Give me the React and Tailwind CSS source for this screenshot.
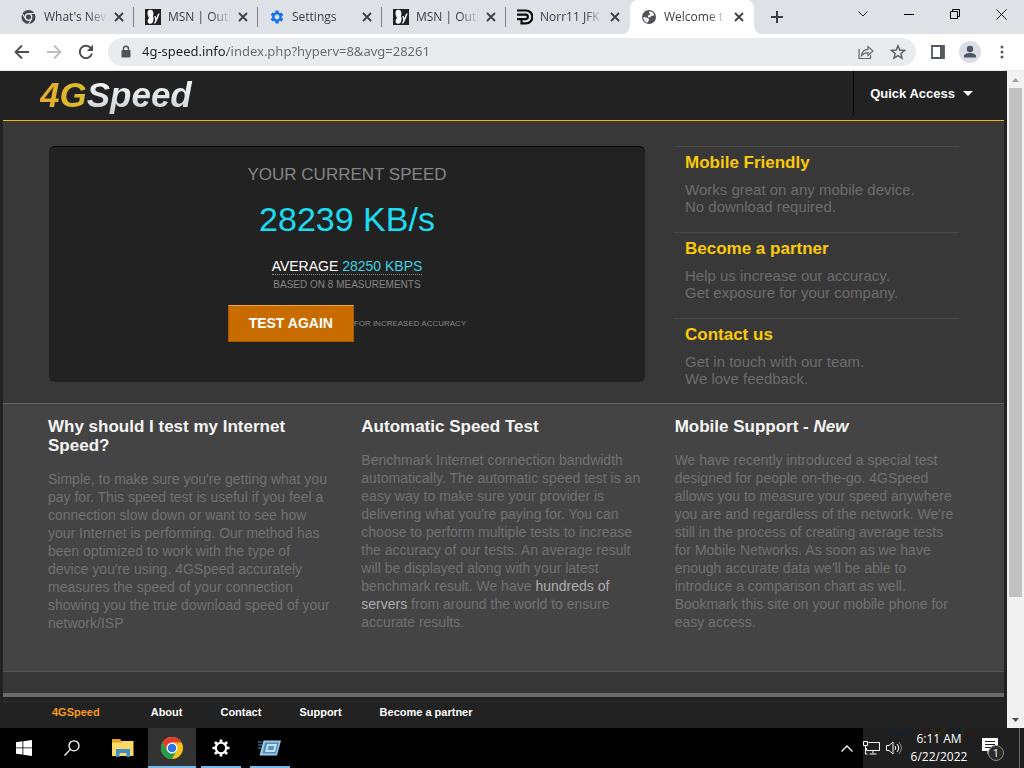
import React from "react";

const UI_FONT = "font-['Open_Sans','Noto_Sans',sans-serif]";

function ChromeMono() {
  return (
    <svg viewBox="0 0 16 16" className="size-4 shrink-0" fill="none" aria-hidden="true">
      <circle cx="7.500" cy="8" r="7" fill="#44474b" />
      <circle cx="7.500" cy="8" r="3.200" fill="#44474b" stroke="#dee1e6" strokeWidth="1.400" />
      <path d="M7.500 4.500h6.200M4.400 9.800L1.500 4.800M10.600 9.800l-3 5.200" stroke="#dee1e6" strokeWidth="1.200" />
    </svg>
  );
}

function MsnIcon() {
  return (
    <svg viewBox="0 0 16 16" className="size-4 shrink-0" aria-hidden="true">
      <rect width="16" height="16" fill="#1f2023" />
      <path
        d="M3.400 1.400C4.800.3 7.100.8 8 2.600C8.600 4 8.400 5.700 8 7.200C8.900 9 8.700 12.300 7.300 13.900C6 15.100 3.600 14.900 2.900 13.400C2.200 11.800 2.800 10 4.200 9C2.700 7.300 1.700 3 3.400 1.400Z"
        fill="#fff"
      />
      <path d="M9.200 7.200L10.600 6.900L11.400 9.200L13 4.800L14.700 4.600C13.500 8 12.200 11.800 10.200 14.600L8.700 14.300C9.600 13 10.200 12 10.300 11Z" fill="#fff" />
    </svg>
  );
}

function GearShape({ className, color, hole }) {
  return (
    <svg viewBox="0 0 24 24" className={className} aria-hidden="true">
      <path
        fill={color}
        d="M19.140 12.940c.04-.3.06-.61.06-.94 0-.32-.02-.64-.07-.94l2.030-1.580c.18-.14.23-.41.12-.61l-1.920-3.320c-.12-.22-.37-.29-.59-.22l-2.390.96c-.5-.38-1.030-.7-1.620-.94l-.36-2.540c-.04-.24-.24-.41-.48-.41h-3.840c-.24 0-.43.17-.47.41l-.36 2.540c-.59.24-1.130.57-1.620.94l-2.390-.96c-.22-.08-.47 0-.59.22L2.740 8.870c-.12.21-.08.47.12.61l2.030 1.580c-.05.3-.09.63-.09.94s.02.64.07.94l-2.030 1.580c-.18.14-.23.41-.12.61l1.920 3.320c.12.22.37.29.59.22l2.390-.96c.5.38 1.030.7 1.620.94l.36 2.540c.05.24.24.41.48.41h3.840c.24 0 .44-.17.47-.41l.36-2.540c.59-.24 1.130-.56 1.620-.94l2.390.96c.22.08.47 0 .59-.22l1.920-3.320c.12-.22.07-.47-.12-.61l-2.010-1.580z"
      />
      <circle cx="12" cy="12" r="3.600" fill={hole} />
    </svg>
  );
}

function ParallelIcon() {
  return (
    <svg viewBox="0 0 16 16" className="size-4 shrink-0" fill="none" stroke="#0a0a0a" strokeWidth="2.200" aria-hidden="true">
      <path d="M0 1.500h9a6.200 6.200 0 0 1 0 12.800H4.500V10" />
      <path d="M0 5.700h8.600a2.200 2.200 0 0 1 0 4.400H0" />
    </svg>
  );
}

function GlobeIcon() {
  return (
    <svg viewBox="0 0 16 16" className="size-4 shrink-0" aria-hidden="true">
      <circle cx="8" cy="8" r="7" fill="#505357" />
      <path d="M8.600 2.300l2.600.8 2.300 2.600-1.500 1.100-2 .2-.6 1.500-2.200-.2-.4-1.700 2-.6.300-1.500-1.300-.6zM2.300 8l3.400.6 2.400 1.500-.5 1.900-1.500 1.800C3.800 12.900 2.200 10.700 2.300 8z" fill="#fff" />
    </svg>
  );
}

function CloseX() {
  return (
    <svg viewBox="0 0 10 10" className="size-2.5" fill="none" stroke="#3c4043" strokeWidth="1.800" aria-hidden="true">
      <path d="M1 1l8 8M9 1L1 9" />
    </svg>
  );
}

const TABS = [
  { title: "What's New", icon: <ChromeMono /> },
  { title: "MSN | Outl", icon: <MsnIcon /> },
  { title: "Settings", icon: <GearShape className="size-4 shrink-0" color="#1a73e8" hole="#dee1e6" /> },
  { title: "MSN | Outl", icon: <MsnIcon /> },
  { title: "Norr11 JFK", icon: <ParallelIcon /> },
  { title: "Welcome t", icon: <GlobeIcon />, active: true },
];

function Tab({ title, icon, active, divider }) {
  return (
    <div
      className={
        "relative flex h-full w-[124px] items-center pr-2.5 pl-[11px] " +
        (active ? "rounded-t-lg bg-white" : "")
      }
    >
      {active && (
        <svg viewBox="0 0 8 8" className="absolute bottom-0 -left-2 size-2" fill="#fff" aria-hidden="true">
          <path d="M8 0v8H0a8 8 0 0 0 8-8z" />
        </svg>
      )}
      {active && (
        <svg viewBox="0 0 8 8" className="absolute -right-2 bottom-0 size-2" fill="#fff" aria-hidden="true">
          <path d="M0 0v8h8a8 8 0 0 1-8-8z" />
        </svg>
      )}
      <button
        type="button"
        role="tab"
        aria-selected={Boolean(active)}
        className="flex min-w-0 flex-1 items-center gap-[7px] whitespace-nowrap text-left text-xs text-[#3c4043] [mask-image:linear-gradient(to_right,#000_68px,transparent_86px)]"
      >
        {icon}
        {title}
      </button>
      <button type="button" aria-label="Close tab" className="ml-1 flex shrink-0">
        <CloseX />
      </button>
      {divider && <span className="-mr-2.5 ml-[9px] h-5 w-px bg-[#808489]" />}
    </div>
  );
}

function TabStrip() {
  return (
    <div className="flex h-[34px] bg-[#dee1e6]">
      <div role="tablist" className="flex pl-2.5">
        {TABS.map((t, i) => (
          <Tab key={i} {...t} divider={i < 4} />
        ))}
      </div>
      <button type="button" aria-label="New tab" className="flex w-[46px] items-center justify-center">
        <svg viewBox="0 0 12 12" className="size-3" stroke="#3c4043" strokeWidth="2" aria-hidden="true">
          <path d="M6 0v12M0 6h12" />
        </svg>
      </button>
      <div className="ml-auto flex h-7">
        <button type="button" aria-label="Search tabs" className="flex w-[46px] items-center justify-center">
          <svg viewBox="0 0 10 6" className="h-1.5 w-2.5" fill="none" stroke="#222" aria-hidden="true">
            <path d="M.5.5L5 5 9.500.5" />
          </svg>
        </button>
        <button type="button" aria-label="Minimize" className="flex w-[46px] items-center justify-center">
          <span className="h-px w-2.5 bg-black" />
        </button>
        <button type="button" aria-label="Restore" className="flex w-[46px] items-center justify-center">
          <svg viewBox="0 0 10 10" className="size-2.5" fill="none" stroke="#000" aria-hidden="true">
            <path d="M.5 2.500h7v7h-7zM2.500 2.500v-2h7v7h-2" />
          </svg>
        </button>
        <button type="button" aria-label="Close window" className="flex w-[46px] items-center justify-center">
          <svg viewBox="0 0 11 11" className="size-[11px]" fill="none" stroke="#000" aria-hidden="true">
            <path d="M.5.5l10 10M10.500.5l-10 10" />
          </svg>
        </button>
      </div>
    </div>
  );
}

function ToolButton({ label, children }) {
  return (
    <button type="button" aria-label={label} className="flex h-8 w-8 shrink-0 items-center justify-center">
      {children}
    </button>
  );
}

function Toolbar() {
  return (
    <div className="flex h-[37px] items-center border-b border-[#e4e6e9] bg-white px-1.5">
      <ToolButton label="Back">
        <svg viewBox="0 0 16 16" className="size-4" fill="none" stroke="#4b4e52" strokeWidth="1.900" aria-hidden="true">
          <path d="M15 8H2M8 1.500L1.500 8 8 14.500" />
        </svg>
      </ToolButton>
      <ToolButton label="Forward">
        <svg viewBox="0 0 16 16" className="size-4" fill="none" stroke="#bcbec1" strokeWidth="1.900" aria-hidden="true">
          <path d="M1 8h13M8 1.500L14.500 8 8 14.500" />
        </svg>
      </ToolButton>
      <ToolButton label="Reload">
        <svg viewBox="0 0 16 16" className="size-4" fill="none" aria-hidden="true">
          <path d="M13.200 4.500A6.200 6.200 0 1 0 14 9.500" stroke="#4b4e52" strokeWidth="1.900" />
          <path d="M15 .8v6.200H8.800z" fill="#4b4e52" />
        </svg>
      </ToolButton>
      <div className="mx-1.5 flex h-7 min-w-0 flex-1 items-center rounded-full bg-[#e9ebee] pl-3 pr-0.5">
        <svg viewBox="0 0 12 14" className="h-3.5 w-3 shrink-0" fill="none" aria-hidden="true">
          <rect x="1.500" y="5" width="9" height="7.500" rx="1" fill="#505357" />
          <path d="M3.500 5.500V3.800a2.500 2.500 0 0 1 5 0v1.700" stroke="#505357" strokeWidth="1.400" />
        </svg>
        <input
          type="text"
          aria-label="Address"
          defaultValue="4g-speed.info/index.php?hyperv=8&avg=28261"
          className="ml-2.5 min-w-0 flex-1 bg-[linear-gradient(to_right,#202124_85px,#66696e_85px)] bg-clip-text font-['Noto_Sans',sans-serif] text-[13px] text-transparent outline-none"
        />
        <ToolButton label="Share">
          <svg viewBox="0 0 16 16" className="size-4" fill="none" stroke="#66696e" strokeWidth="1.200" aria-hidden="true">
            <path d="M1 5v9.500h11.500V11" />
            <path d="M3.500 11.500C4 7.500 6.500 5.500 10 5.300V2.500L15 7l-5 4.500V8.700C7.500 8.700 5.500 9.200 3.500 11.500z" />
          </svg>
        </ToolButton>
        <ToolButton label="Bookmark this tab">
          <svg viewBox="0 0 16 16" className="size-4" fill="none" stroke="#5f6368" strokeWidth="1.500" aria-hidden="true">
            <path d="M8 1.800l1.800 4.300 4.700.4-3.600 3 1.100 4.600L8 11.700l-4 2.400 1.100-4.600-3.600-3 4.700-.4z" />
          </svg>
        </ToolButton>
      </div>
      <ToolButton label="Side panel">
        <svg viewBox="0 0 14 14" className="size-3.5" aria-hidden="true">
          <path d="M1 1h12v12H1z" fill="none" stroke="#55585c" strokeWidth="1.800" />
          <path d="M9 1h4v12H9z" fill="#55585c" />
        </svg>
      </ToolButton>
      <ToolButton label="Profile">
        <svg viewBox="0 0 22 22" className="size-[22px]" aria-hidden="true">
          <circle cx="11" cy="11" r="11" fill="#dadde3" />
          <circle cx="11" cy="8" r="3.200" fill="#4b5563" />
          <path d="M5 16.500v-1.200c0-2.200 3.500-3.200 6-3.200s6 1 6 3.200v1.200z" fill="#4b5563" />
        </svg>
      </ToolButton>
      <ToolButton label="Menu">
        <svg viewBox="0 0 4 14" className="h-3.5 w-1" fill="#55585c" aria-hidden="true">
          <circle cx="2" cy="2" r="1.500" />
          <circle cx="2" cy="7" r="1.500" />
          <circle cx="2" cy="12" r="1.500" />
        </svg>
      </ToolButton>
    </div>
  );
}

const FEATURES = [
  { title: "Mobile Friendly", lines: ["Works great on any mobile device.", "No download required."] },
  { title: "Become a partner", lines: ["Help us increase our accuracy.", "Get exposure for your company."] },
  { title: "Contact us", lines: ["Get in touch with our team.", "We love feedback."] },
];

function SpeedPanel() {
  return (
    <section className="flex h-[236px] flex-1 flex-col items-center rounded-md border-t border-black bg-[#222] uppercase">
      <h2 className="mt-4 text-[17px] leading-6 text-[#858585]">Your current speed</h2>
      <p className="mt-3 text-[34px] leading-10 text-[#1cdcf0] normal-case">28239 KB/s</p>
      <p className="mt-[19px] border-b border-dotted border-[#8a8a8a] text-[14px] leading-4 text-white">
        Average <span className="text-[#3fd0e0]">28250 kbps</span>
      </p>
      <p className="mt-1 text-[10px] leading-3 text-[#858585]">Based on 8 measurements</p>
      <div className="mt-3.5 flex items-center">
        <button
          type="button"
          className="h-[37px] w-[126px] border border-[#a85b00] border-t-[#f0a54a] bg-[#c96c00] text-[14px] font-bold text-white uppercase"
        >
          Test again
        </button>
        <span className="text-[8px] text-[#858585]">For increased accuracy</span>
      </div>
    </section>
  );
}

function InfoColumn({ title, children }) {
  return (
    <section>
      <h2 className="text-[17px] leading-[19px] font-bold text-[#f4f4f4]">{title}</h2>
      <p className="mt-[15px] text-[14px] leading-[18px] text-[#717171]">{children}</p>
    </section>
  );
}

function Site() {
  return (
    <main className="flex min-w-0 flex-1 flex-col bg-[#222] px-[3px] font-['Liberation_Sans',Arial,sans-serif]">
      <header className="flex h-[50px] justify-between border-b border-[#dcbc3c]">
        <h1 className="pl-[37px] text-[35px] leading-[48px] font-bold italic">
          <span className="bg-linear-to-r from-[#e8a92c] to-[#d8c02a] bg-clip-text text-transparent">4G</span>
          <span className="bg-linear-to-b from-white to-[#c9d0d4] bg-clip-text pr-1 text-transparent">Speed</span>
        </h1>
        <button
          type="button"
          className="mb-1 flex items-center gap-2 border-l border-black pr-[31px] pl-4 text-[13px] font-bold text-white"
        >
          Quick Access
          <svg viewBox="0 0 10 5" className="h-[5px] w-2.5" fill="#fff" aria-hidden="true">
            <path d="M0 0h10L5 5z" />
          </svg>
        </button>
      </header>

      <div className="flex gap-[29px] border-t-2 border-[#453625] bg-[#383838] pt-[23px] pr-[45px] pl-[46px]">
        <SpeedPanel />
        <ul className="w-[285px]">
          {FEATURES.map((f) => (
            <li key={f.title} className="h-[86px] border-t border-[#484848] pt-1.5 pl-[11px] last:h-[85px]">
              <h3 className="text-[17px] leading-5 font-bold">
                <a href="#" className="text-[#fbca08]">{f.title}</a>
              </h3>
              <p className="mt-2 text-[15px] leading-[17px] text-[#6c6c6c]">
                {f.lines[0]}
                <br />
                {f.lines[1]}
              </p>
            </li>
          ))}
        </ul>
      </div>

      <div className="grid h-[268px] grid-cols-3 gap-[29px] border-t border-[#626262] bg-[#444] px-[45px] pt-[13px]">
        <InfoColumn title="Why should I test my Internet Speed?">
          Simple, to make sure you're getting what you pay for. This speed test is useful if you feel a
          connection slow down or want to see how your Internet is performing. Our method has been
          optimized to work with the type of device you're using. 4GSpeed accurately measures the speed
          of your connection showing you the true download speed of your network/ISP
        </InfoColumn>
        <InfoColumn title="Automatic Speed Test">
          Benchmark Internet connection bandwidth automatically. The automatic speed test is an easy way
          to make sure your provider is delivering what you're paying for. You can choose to perform
          multiple tests to increase the accuracy of our tests. An average result will be displayed along
          with your latest benchmark result. We have{" "}
          <a href="#" className="text-[#adadad]">hundreds of servers</a> from around the world to ensure
          accurate results.
        </InfoColumn>
        <InfoColumn title={<>Mobile Support - <em>New</em></>}>
          We have recently introduced a special test designed for people on-the-go. 4GSpeed allows you to
          measure your speed anywhere you are and regardless of the network. We're still in the process
          of creating average tests for Mobile Networks. As soon as we have enough accurate data we'll be
          able to introduce a comparison chart as well. Bookmark this site on your mobile phone for easy
          access.
        </InfoColumn>
      </div>

      <div className="h-[26px] border-t border-b-4 border-t-[#555] border-b-[#6b6b6b] bg-[#373737]" />

      <footer className="flex-1 pt-1">
        <nav className="flex border-t border-[#2d2d2d] pt-[3px] pl-[49px] text-[11px] leading-[15px] font-bold text-white">
          <a href="#" className="mr-[51px] text-[#f79a1d]">4GSpeed</a>
          <a href="#" className="mr-[38px]">About</a>
          <a href="#" className="mr-[38px]">Contact</a>
          <a href="#" className="mr-[38px]">Support</a>
          <a href="#">Become a partner</a>
        </nav>
      </footer>
    </main>
  );
}

function Scrollbar() {
  return (
    <div aria-hidden="true" className="flex w-[17px] flex-col items-center bg-[#f1f1f1]">
      <div className="flex h-[17px] items-center">
        <svg viewBox="0 0 7 4" className="h-1 w-[7px]" fill="#a3a3a3"><path d="M0 4h7L3.500 0z" /></svg>
      </div>
      <div className="h-[509px] w-[13px] bg-[#c1c1c1]" />
      <div className="mt-auto flex h-[17px] items-center">
        <svg viewBox="0 0 7 4" className="h-1 w-[7px]" fill="#505050"><path d="M0 0h7L3.500 4z" /></svg>
      </div>
    </div>
  );
}

function TaskButton({ label, children, state }) {
  const look =
    state === "active"
      ? "w-12 border-[#76b9ed] bg-[#333]"
      : state === "open"
        ? "mx-1 w-10 border-[#76b9ed]"
        : "w-12 border-transparent";
  return (
    <button
      type="button"
      aria-label={label}
      className={"flex h-10 items-center justify-center border-b-2 pt-0.5 " + look}
    >
      {children}
    </button>
  );
}

function Taskbar() {
  return (
    <div className="flex h-10 bg-black text-white">
      <TaskButton label="Start">
        <svg viewBox="0 0 16 16" className="size-4" fill="#fff" aria-hidden="true">
          <path d="M0 2.200l6.500-.9v6.200H0zM7.300 1.200L16 0v7.500H7.300zM0 8.300h6.500v6.300L0 13.700zM7.300 8.300H16V16l-8.700-1.200z" />
        </svg>
      </TaskButton>
      <TaskButton label="Search">
        <svg viewBox="0 0 16 16" className="size-4" fill="none" stroke="#fff" strokeWidth="1.300" aria-hidden="true">
          <circle cx="10" cy="5.800" r="5" />
          <path d="M6.400 9.400L.5 15.500" />
        </svg>
      </TaskButton>
      <div className="flex gap-px pl-[3px]">
        <TaskButton label="File Explorer">
          <svg viewBox="0 0 22 18" className="h-[18px] w-[22px]" aria-hidden="true">
            <path d="M0 0h8l1.500 2H21v15H0z" fill="#e3a22b" />
            <path d="M0 3.500L9 3.500 10.500 2H21.500V17H0z" fill="#fbd768" />
            <path d="M4 10h14v8h-3.500v-4h-7v4H4z" fill="#3f8ec4" />
          </svg>
        </TaskButton>
        <TaskButton label="Google Chrome" state="active">
          <svg viewBox="0 0 22 22" className="size-[22px]" aria-hidden="true">
            <circle cx="11" cy="11" r="11" fill="#fbc116" />
            <path d="M1.470 5.500A11 11 0 0 1 20.530 5.500H11L6.240 13.750z" fill="#e33b2e" />
            <path d="M1.470 5.500A11 11 0 0 0 11 22L15.760 13.750H6.240z" fill="#249a4a" />
            <circle cx="11" cy="11" r="5.500" fill="#fff" />
            <circle cx="11" cy="11" r="4.300" fill="#2f76e6" />
          </svg>
        </TaskButton>
        <TaskButton label="Settings" state="open">
          <svg viewBox="0 0 20 20" className="size-[18px]" fill="none" stroke="#fff" aria-hidden="true">
            <circle cx="10" cy="10" r="5.800" strokeWidth="2.400" />
            <path
              d="M10 .5v3.500M10 16v3.500M.5 10h3.500M16 10h3.500M3.300 3.300l2.500 2.500M14.200 14.200l2.500 2.500M16.700 3.300l-2.500 2.500M5.800 14.200l-2.500 2.500"
              strokeWidth="3"
            />
          </svg>
        </TaskButton>
        <TaskButton label="Run" state="open">
          <svg viewBox="0 0 24 18" className="h-[18px] w-6" aria-hidden="true">
            <path d="M5.500 1.500H23L19 16.500H1.500z" fill="#9cc9e6" />
            <path d="M7 3.500h14L18 14.500H4.500z" fill="#4f8db8" />
            <path d="M9 5h10l-2 8H7z" fill="#c4e2f4" />
            <path d="M10.500 7h6l-1 4h-6z" fill="#5a94bc" />
            <path d="M0 3h4M0 6h4M0 9h3" stroke="#5e97bd" />
          </svg>
        </TaskButton>
      </div>

      <div className="ml-auto flex items-center">
        <button type="button" aria-label="Show hidden icons" className="flex w-8 justify-center">
          <svg viewBox="0 0 12 7" className="h-[7px] w-3" fill="none" stroke="#fff" strokeWidth="1.300" aria-hidden="true">
            <path d="M.5 6.500L6 1l5.500 5.500" />
          </svg>
        </button>
        <div className="relative flex h-10 items-center bg-[#1f1f1f]">
          <svg viewBox="0 0 88 10" className="absolute top-0 left-[26px] h-2.5 w-[88px]" fill="none" strokeWidth="3" aria-hidden="true">
            <path d="M1 0q10 14 22 0" stroke="#15202c" />
            <path d="M27 0q6 12 13 0" stroke="#30191a" />
            <path d="M43 0q6 12 13 0" stroke="#2f2815" />
            <path d="M59 0q6 14 11 6V0" stroke="#15202c" />
            <path d="M74 0v9" stroke="#172a1c" />
            <path d="M77 0q4 12 10 3" stroke="#30191a" />
          </svg>
          <svg viewBox="0 0 17 14" className="h-3.5 w-[17px]" fill="none" stroke="#fff" aria-hidden="true">
            <path d="M5.500 1.500h11v8h-13V7M10 9.500v3M6.500 13h7" />
            <path d="M.5.5h4v4h-4zM2.500 4.500v8.500h2" />
          </svg>
          <svg viewBox="0 0 17 14" className="ml-1.5 h-3.5 w-[17px]" fill="none" stroke="#fff" aria-hidden="true">
            <path d="M.5 4.500H3L7 1v12L3 9.500H.5z" />
            <path d="M9 5q1.500 2 0 4" />
            <path d="M11 3q3.500 4 0 8" />
            <path d="M13 1q5 6 0 12" stroke="#8a8a8a" />
          </svg>
          <div className="relative w-[72px] text-center text-xs leading-[18px]">
            6:11 AM
            <br />
            6/22/2022
          </div>
          <button type="button" aria-label="Notifications, 1 new" className="flex w-8 justify-center">
            <svg viewBox="0 0 26 26" className="size-[26px]" aria-hidden="true">
              <path d="M4 3h16v13h-7l-3.500 3.500V16H4z" fill="#fff" />
              <path d="M7 6.500h10M7 9.500h10M7 12.500h7" stroke="#1f1f1f" strokeWidth="1.200" />
              <circle cx="18" cy="18" r="7.500" fill="#2b2b2b" stroke="#8a8a8a" />
              <text x="18" y="22" textAnchor="middle" fontSize="11" fill="#fff">1</text>
            </svg>
          </button>
          <span className="ml-3 h-10 w-[5px] border-l border-[#6a6a6a]" />
        </div>
      </div>
    </div>
  );
}

export default function App() {
  return (
    <div className={"flex min-h-screen flex-col bg-white " + UI_FONT}>
      <TabStrip />
      <Toolbar />
      <div className="flex flex-1">
        <Site />
        <Scrollbar />
      </div>
      <Taskbar />
    </div>
  );
}
